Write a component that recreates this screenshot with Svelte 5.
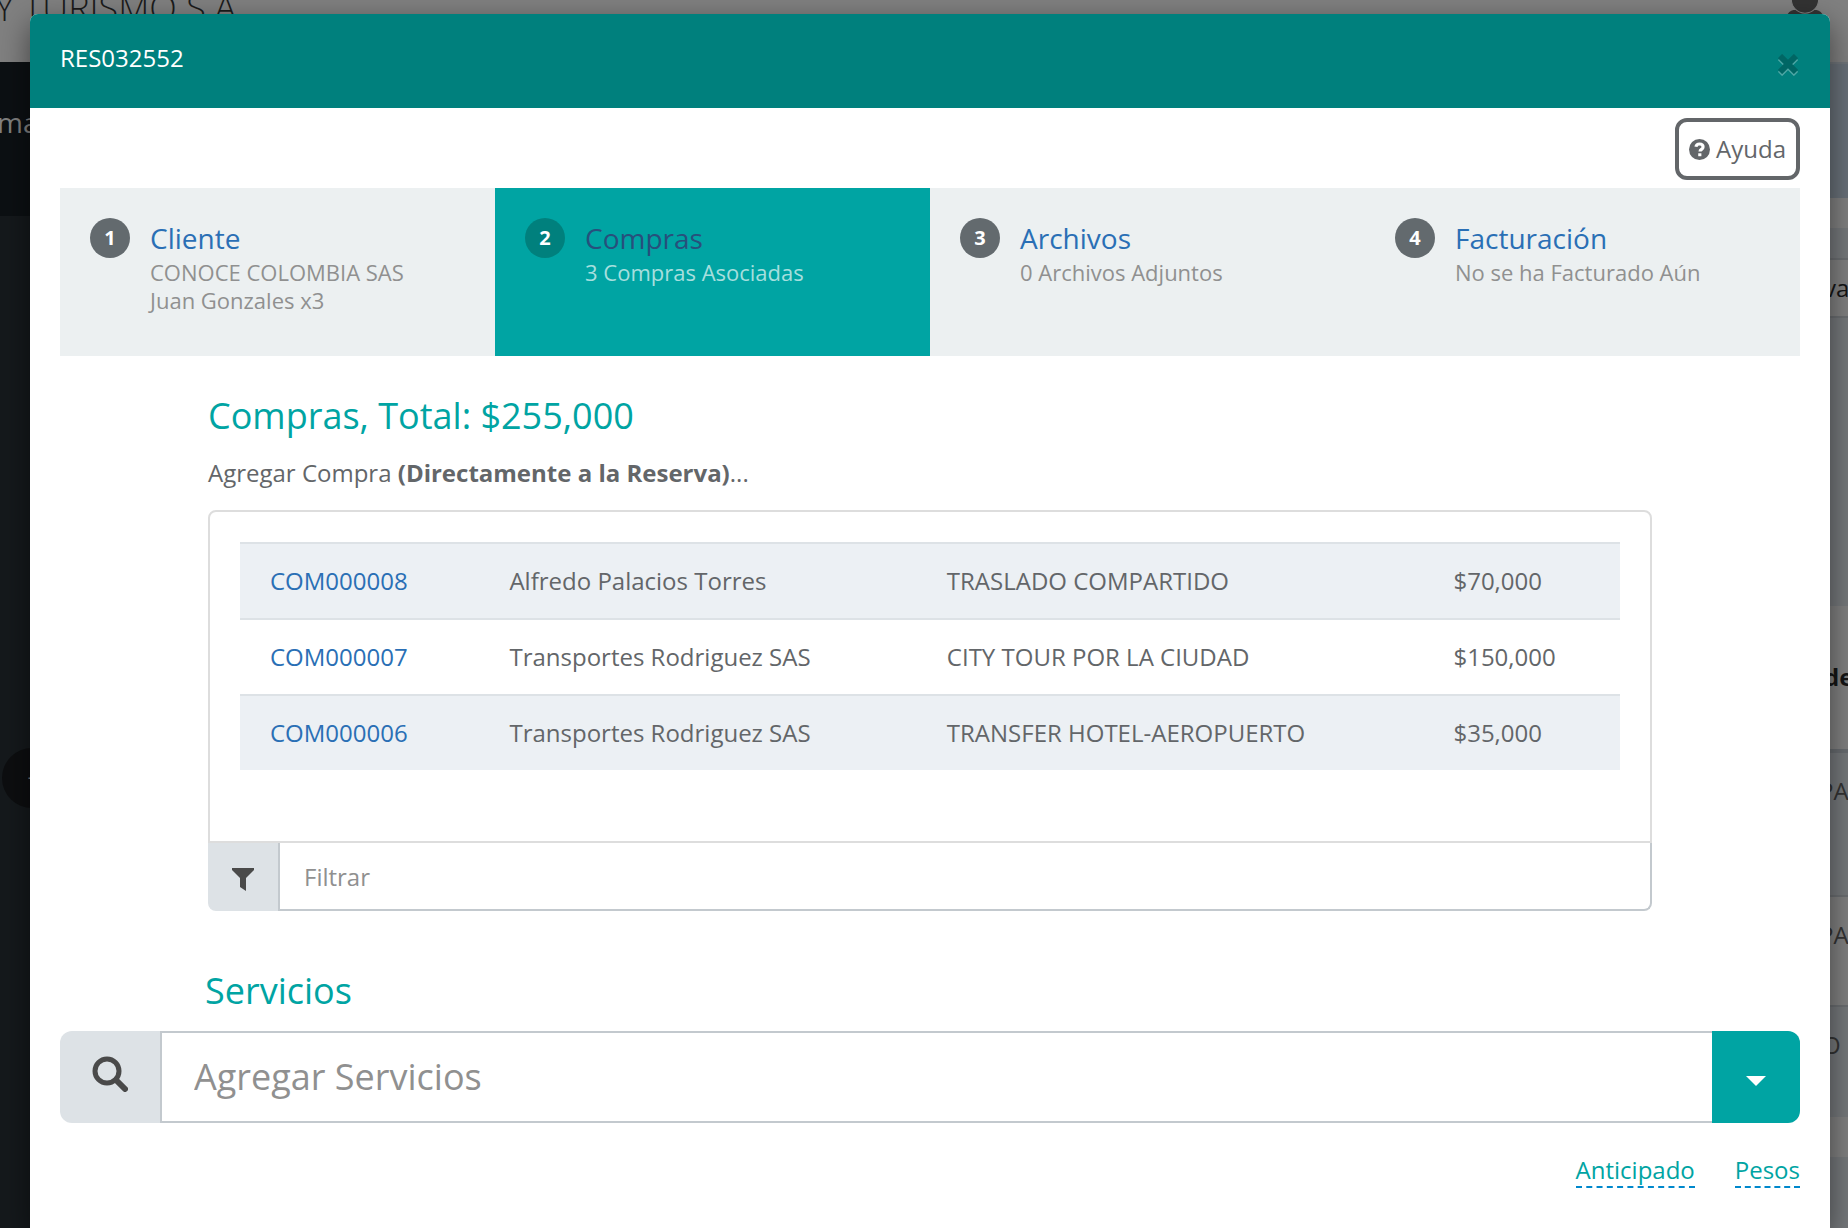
<script>
  let filter = $state("");
  let service = $state("");
  let activeStep = $state(2);

  const steps = [
    { id: 1, title: "Cliente", lines: ["CONOCE COLOMBIA SAS", "Juan Gonzales x3"] },
    { id: 2, title: "Compras", lines: ["3 Compras Asociadas"] },
    { id: 3, title: "Archivos", lines: ["0 Archivos Adjuntos"] },
    { id: 4, title: "Facturación", lines: ["No se ha Facturado Aún"] },
  ];

  const purchases = [
    { code: "COM000008", provider: "Alfredo Palacios Torres", name: "TRASLADO COMPARTIDO", price: "$70,000" },
    { code: "COM000007", provider: "Transportes Rodriguez SAS", name: "CITY TOUR POR LA CIUDAD", price: "$150,000" },
    { code: "COM000006", provider: "Transportes Rodriguez SAS", name: "TRANSFER HOTEL-AEROPUERTO", price: "$35,000" },
  ];

  let visible = $derived(
    purchases.filter((p) =>
      Object.values(p).join(" ").toLowerCase().includes(filter.toLowerCase())
    )
  );

  function selectStep(event, id) {
    event.preventDefault();
    activeStep = id;
  }
</script>

<div class="page">
  <!-- page behind the dialog -->
  <div class="backdrop" aria-hidden="true">
    <div class="topbar">
      <span class="brand">Y TURISMO S.A.</span>
      <svg class="user" viewBox="0 0 40 40">
        <path d="M0 40c0-10 3-18 9-19h22c6 1 9 9 9 19z" />
        <circle cx="20" cy="11" r="13" />
      </svg>
    </div>
    <div class="columns">
      <div class="sidebar">
        <div class="side-head">ma</div>
        <div class="side-toggle">+</div>
      </div>
      <div class="behind">
        <div class="band slate"></div>
        <div class="band light thin"></div>
        <div class="band mist thin"></div>
        <div class="band tab">vas</div>
        <div class="band mist space"></div>
        <div class="band head">de</div>
        <div class="band mist row">PA</div>
        <div class="band light row short">PA</div>
        <div class="band mist row short last">O</div>
        <div class="band light foot"></div>
      </div>
    </div>
  </div>

  <div class="modal" role="dialog" aria-labelledby="modal-title">
    <header>
      <h1 id="modal-title">RES032552</h1>
      <button class="close" aria-label="Cerrar">
        <svg viewBox="0 0 20 20"><path d="M2 2l16 16M18 2L2 18" /></svg>
      </button>
    </header>

    <div class="body">
      <div class="help">
        <button class="help-btn">
          <svg viewBox="0 0 20 20">
            <circle cx="10" cy="10" r="10" />
            <path d="M6.6 7.4C7 5.500 8.300 4.800 10 4.800c2 0 3.400 1.100 3.400 2.800 0 2.300-2.900 2.200-2.900 4.300" />
            <rect x="8.800" y="13.600" width="3" height="2.800" />
          </svg>
          Ayuda
        </button>
      </div>

      <ul class="steps">
        {#each steps as step}
          <li class:active={step.id === activeStep}>
            <span class="badge">{step.id}</span>
            <div>
              <a href="#paso-{step.id}" onclick={(event) => selectStep(event, step.id)}>{step.title}</a>
              {#each step.lines as line}
                <p>{line}</p>
              {/each}
            </div>
          </li>
        {/each}
      </ul>

      <section class="purchases">
        <h2>Compras, Total: $255,000</h2>
        <p class="add">Agregar Compra <strong>(Directamente a la Reserva)</strong>...</p>
        <div class="panel">
          <table>
            <tbody>
              {#each visible as p}
                <tr>
                  <td><a href="#{p.code}">{p.code}</a></td>
                  <td>{p.provider}</td>
                  <td>{p.name}</td>
                  <td>{p.price}</td>
                </tr>
              {/each}
            </tbody>
          </table>
        </div>
        <div class="filter">
          <label for="filter" aria-label="Filtrar compras">
            <svg viewBox="0 0 22 24"><path d="M0 1h22v2l-8 8v13l-6-4v-9L0 3z" /></svg>
          </label>
          <input id="filter" type="text" placeholder="Filtrar" bind:value={filter} />
        </div>
        <h2 class="services-title">Servicios</h2>
      </section>

      <div class="search">
        <label for="service" aria-label="Buscar servicios">
          <svg viewBox="0 0 36 36">
            <circle cx="15" cy="15" r="12" />
            <path d="M24 24l9 9" />
          </svg>
        </label>
        <input id="service" type="text" placeholder="Agregar Servicios" bind:value={service} />
        <button aria-label="Mostrar opciones">
          <svg viewBox="0 0 20 10"><path d="M0 0h20L10 10z" /></svg>
        </button>
      </div>

      <div class="options">
        <a href="#anticipado">Anticipado</a>
        <a href="#pesos">Pesos</a>
      </div>
    </div>
  </div>
</div>

<style>
  :global(body) {
    margin: 0;
    overflow: hidden;
  }

  .page {
    position: relative;
    min-height: 100vh;
    padding: 14px 18px 0 30px;
    box-sizing: border-box;
    overflow: hidden;
    display: flex;
    color: #636669;
    font-family: "Open Sans", sans-serif;
    font-size: 24px;
    line-height: 32px;
  }

  /* everything under the dialog is already dimmed */
  .backdrop {
    position: absolute;
    inset: 0;
    display: flex;
    flex-direction: column;
    overflow: hidden;
    background: #75787b;
  }

  .topbar {
    display: flex;
    justify-content: space-between;
    height: 62px;
    padding-right: 22px;
    box-sizing: border-box;
    background: #808080;
  }

  .brand {
    margin: -18px 0 0 -5px;
    color: #1b1b1b;
    font-size: 36px;
    font-weight: 300;
    line-height: 52px;
  }

  .user {
    width: 42px;
    height: 42px;
    margin-top: -12px;
    fill: #333;
  }

  .user circle {
    stroke: #808080;
    stroke-width: 1;
  }

  .columns {
    display: flex;
    flex: 1;
    justify-content: space-between;
  }

  .sidebar {
    width: 60px;
    background: #15191c;
  }

  .side-head {
    height: 154px;
    padding-top: 44px;
    box-sizing: border-box;
    background: #0c1013;
    color: #808080;
    font-size: 28px;
    text-indent: -3px;
  }

  .side-toggle {
    width: 60px;
    height: 60px;
    margin: 532px 0 0 2px;
    border-radius: 50%;
    background: #0d0e10;
    color: #777;
    line-height: 60px;
    text-align: center;
    text-indent: 4px;
  }

  .behind {
    width: 32px;
  }

  .band {
    box-sizing: border-box;
    padding-left: 8px;
    overflow: hidden;
    white-space: nowrap;
  }

  .light {
    background: #808080;
  }

  .mist {
    background: #75787b;
  }

  .slate {
    height: 136px;
    border-top: 2px solid #70757a;
    background: #687078;
  }

  .thin {
    height: 30px;
  }

  .tab {
    height: 60px;
    border-top: 2px solid #6b6e71;
    border-bottom: 2px solid #6b6e71;
    background: #808080;
    color: #151515;
    line-height: 56px;
  }

  .space {
    height: 288px;
  }

  .head {
    height: 147px;
    border-bottom: 4px solid #686c70;
    background: #808080;
    color: #151515;
    font-weight: 700;
    line-height: 142px;
  }

  .row {
    height: 144px;
    padding: 22px 0 0 3px;
    border-bottom: 2px solid #6b6e71;
    color: #333;
  }

  .short {
    height: 110px;
  }

  .last {
    padding-left: 6px;
    border-bottom: none;
  }

  .foot {
    height: 40px;
  }

  .modal {
    position: relative;
    flex: 1;
    overflow: hidden;
    border-radius: 8px 8px 0 0;
    background: #fff;
    box-shadow: 0 10px 30px rgba(0, 0, 0, 0.5);
  }

  header {
    display: flex;
    justify-content: space-between;
    height: 94px;
    padding: 28px 30px 0;
    box-sizing: border-box;
    background: #00807d;
  }

  h1 {
    margin: 0;
    color: #fff;
    font-size: 24px;
    font-weight: 400;
  }

  button {
    padding: 0;
    border: none;
    background: none;
    font: inherit;
    cursor: pointer;
  }

  .close {
    width: 24px;
    height: 44px;
  }

  .close svg {
    display: block;
    width: 20px;
    height: 20px;
    margin: auto;
    fill: none;
    stroke: #006664;
    stroke-width: 6;
    filter: drop-shadow(0 2px 0 #4da6a4);
  }

  .body {
    padding: 10px 30px 30px;
  }

  .help {
    display: flex;
    justify-content: flex-end;
    margin-bottom: 8px;
  }

  .help-btn {
    display: flex;
    align-items: center;
    gap: 6px;
    height: 62px;
    padding: 0 10px;
    border: 4px solid #636669;
    border-radius: 12px;
    color: #636669;
  }

  .help-btn svg {
    width: 21px;
    height: 21px;
    fill: #636669;
  }

  .help-btn path {
    fill: none;
    stroke: #fff;
    stroke-width: 3;
  }

  .help-btn rect {
    fill: #fff;
  }

  .steps {
    display: grid;
    grid-template-columns: repeat(4, 1fr);
    margin: 0;
    padding: 0;
    background: #ecf0f1;
    list-style: none;
  }

  .steps li {
    display: flex;
    gap: 20px;
    min-height: 168px;
    padding: 30px;
    box-sizing: border-box;
  }

  .badge {
    width: 40px;
    height: 40px;
    border-radius: 50%;
    background: #636a6e;
    color: #fff;
    font-size: 20px;
    font-weight: 700;
    line-height: 40px;
    text-align: center;
  }

  .steps a {
    display: block;
    color: #2a6fb5;
    font-size: 28px;
    line-height: 40px;
    text-decoration: none;
  }

  .steps p {
    margin: 0;
    color: #909090;
    font-size: 22px;
    line-height: 28px;
  }

  .steps .active {
    background: #00a4a3;
  }

  .active .badge {
    background: #00807d;
  }

  .steps .active a {
    color: #27507c;
  }

  .steps .active p {
    color: #a6dfde;
  }

  .purchases {
    padding: 0 148px;
  }

  h2 {
    margin: 36px 0 0;
    color: #00a4a3;
    font-size: 36px;
    font-weight: 400;
    line-height: 48px;
  }

  .add {
    margin: 17px 0 21px;
  }

  .panel {
    min-height: 333px;
    padding: 30px;
    box-sizing: border-box;
    border: 2px solid #ddd;
    border-radius: 8px 8px 0 0;
  }

  table {
    width: 100%;
    border-collapse: collapse;
  }

  td {
    height: 74px;
    padding: 0 30px;
    border-top: 2px solid #dde2e6;
  }

  td a {
    color: #2a6fb5;
    text-decoration: none;
  }

  tr:nth-child(odd) {
    background: #ecf0f4;
  }

  .filter,
  .search {
    display: flex;
  }

  .filter label,
  .search label {
    display: flex;
    align-items: center;
    justify-content: center;
    box-sizing: border-box;
    background: #dde2e6;
  }

  .filter label {
    width: 70px;
    padding-top: 4px;
    border-radius: 0 0 0 8px;
  }

  .filter svg {
    width: 22px;
    height: 24px;
    fill: #4a4a4a;
  }

  input {
    flex: 1;
    min-width: 0;
    box-sizing: border-box;
    border: 2px solid #c3c9ce;
    background: #fff;
    color: #636669;
    font: inherit;
    outline: none;
  }

  input::placeholder {
    color: #909090;
    opacity: 1;
  }

  .filter input {
    height: 68px;
    padding: 0 24px;
    border-top: none;
    border-radius: 0 0 8px 0;
  }

  .services-title {
    margin: 56px 0 16px -3px;
  }

  .search label {
    width: 100px;
    padding-bottom: 6px;
    border-radius: 12px 0 0 12px;
  }

  .search label svg {
    width: 36px;
    height: 36px;
    fill: none;
    stroke: #4a4a4a;
    stroke-width: 5;
  }

  .search label path {
    stroke-width: 6;
    stroke-linecap: round;
  }

  .search input {
    height: 92px;
    padding: 0 32px 2px;
    border-right: none;
    font-size: 36px;
  }

  .search button {
    width: 88px;
    border-radius: 0 12px 12px 0;
    background: #00a4a3;
  }

  .search button svg {
    width: 20px;
    height: 10px;
    fill: #fff;
  }

  .options {
    display: flex;
    justify-content: flex-end;
    gap: 40px;
    margin-top: 31px;
  }

  .options a {
    border-bottom: 2px dashed #0088cc;
    color: #00a4a3;
    text-decoration: none;
  }
</style>
